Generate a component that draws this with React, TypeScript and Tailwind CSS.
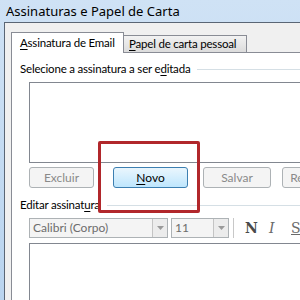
import React from 'react'

const font = { fontFamily: 'Lato, "Noto Sans", Arial, sans-serif' }

function U({ children }: { children: React.ReactNode }) {
    return <span className="underline underline-offset-2 decoration-1">{children}</span>
}

function Btn({ children, width, primary }: { children: React.ReactNode; width: string; primary?: boolean }) {
    if (primary) {
        return (
            <div className={`${width} shrink-0 h-[21px] rounded-[3px] border border-[#3c7fb1] bg-gradient-to-b from-[#eaf6fd] to-[#bee6fd] flex items-center justify-center text-[12px] text-black whitespace-nowrap`}>
                {children}
            </div>
        )
    }
    return (
        <div className={`${width} shrink-0 h-[21px] rounded-[3px] border border-[#adb2b5] bg-[#f4f4f4] flex items-center justify-center text-[12px] text-[#8a8a8a] whitespace-nowrap`}>
            {children}
        </div>
    )
}

function Combo({ text, width }: { text: string; width: string }) {
    return (
        <div className={`${width} shrink-0 h-[20px] border border-[#adb2b5] bg-[#f4f4f4] flex`}>
            <div className="flex-1 pl-[3px] text-[12px] leading-[18px] text-[#6d6d6d] whitespace-nowrap">{text}</div>
            <div className="w-[15px] border-l border-[#c4c4c4] bg-[#ececec] flex items-center justify-center">
                <svg width="7" height="4" viewBox="0 0 7 4"><path d="M0 0h7L3.5 4z" fill="#9a9a9a" /></svg>
            </div>
        </div>
    )
}

export default function App() {
    return (
        <div className="w-[300px] h-[300px] overflow-hidden relative bg-gradient-to-b from-[#cfe2f5] to-[#b9d4ef]" style={font}>
            {/* title bar */}
            <div className="h-[22px] pl-[6px] text-[13px] leading-[22px] text-black whitespace-nowrap" style={{ fontFamily: '"Noto Sans", sans-serif' }}>
                Assinaturas e Papel de Carta
            </div>

            {/* dialog body */}
            <div className="ml-[4px] w-[340px] h-[278px] border-l border-t border-[#5a6675] bg-[#f0f0f0] pl-[6px] pt-[8px]">
                {/* tabs */}
                <div className="flex items-end h-[21px] text-[11.5px] tracking-[-0.2px] whitespace-nowrap">
                    <div className="w-[113px] shrink-0 h-[21px] border border-b-0 border-[#898c95] bg-white pl-[8px] leading-[20px] relative top-px z-10">
                        <U>A</U>ssinatura de Email
                    </div>
                    <div className="w-[123px] shrink-0 h-[17px] border border-l-0 border-b-0 border-[#898c95] bg-gradient-to-b from-[#f2f2f2] to-[#dcdcdc] pl-[5px] leading-[16px]">
                        <U>P</U>apel de carta pessoal
                    </div>
                </div>

                {/* panel */}
                <div className="h-[260px] border-l border-t border-[#898c95] bg-white pl-[8px] text-[11.5px] tracking-[-0.2px] text-black">
                    <div className="flex items-center h-[18px] mt-[7px] whitespace-nowrap">
                        <span>Selecione a assinatura a ser e<U>d</U>itada</span>
                        <div className="flex-1 ml-[7px] h-px bg-[#d5dfe5]" />
                    </div>

                    <div className="ml-[9px] mt-[4px] h-[81px] border border-[#828790] bg-white" />

                    <div className="flex ml-[9px] mt-[4px] tracking-normal">
                        <Btn width="w-[65px]">Excluir</Btn>
                        <div className="w-[19px] shrink-0" />
                        <Btn width="w-[75px]" primary><span><U>N</U>ovo</span></Btn>
                        <div className="w-[15px] shrink-0" />
                        <Btn width="w-[68px]">Salvar</Btn>
                        <div className="w-[11px] shrink-0" />
                        <Btn width="w-[70px]">Renomear</Btn>
                    </div>

                    <div className="flex items-center h-[18px] mt-[8px] whitespace-nowrap">
                        <span>Editar assinat<U>u</U>ra</span>
                        <div className="flex-1 ml-[7px] h-px bg-[#d5dfe5]" />
                    </div>

                    <div className="flex items-center ml-[9px] mt-[4px] h-[20px] tracking-normal">
                        <Combo text="Calibri (Corpo)" width="w-[139px]" />
                        <div className="w-[3px] shrink-0" />
                        <Combo text="11" width="w-[58px]" />
                        <div className="ml-[4px] w-px h-[20px] bg-[#c8c8c8]" />
                        <div className="ml-[11px] w-[14px] text-[14px] font-bold text-[#4a4a4a]" style={{ fontFamily: '"DejaVu Serif", serif' }}>N</div>
                        <div className="ml-[10px] w-[12px] text-[14px] italic text-[#6a6a6a]" style={{ fontFamily: '"DejaVu Serif", serif' }}>I</div>
                        <div className="ml-[10px] text-[14px] underline text-[#6a6a6a]" style={{ fontFamily: '"DejaVu Serif", serif' }}>S</div>
                    </div>

                    <div className="ml-[9px] mt-[5px] h-[80px] border border-[#828790] bg-white" />
                </div>
            </div>

            {/* red highlight */}
            <div className="absolute left-[98px] top-[141px] w-[102px] h-[72px] border-[3px] border-[#b1272b] rounded-[2px]" />
        </div>
    )
}
